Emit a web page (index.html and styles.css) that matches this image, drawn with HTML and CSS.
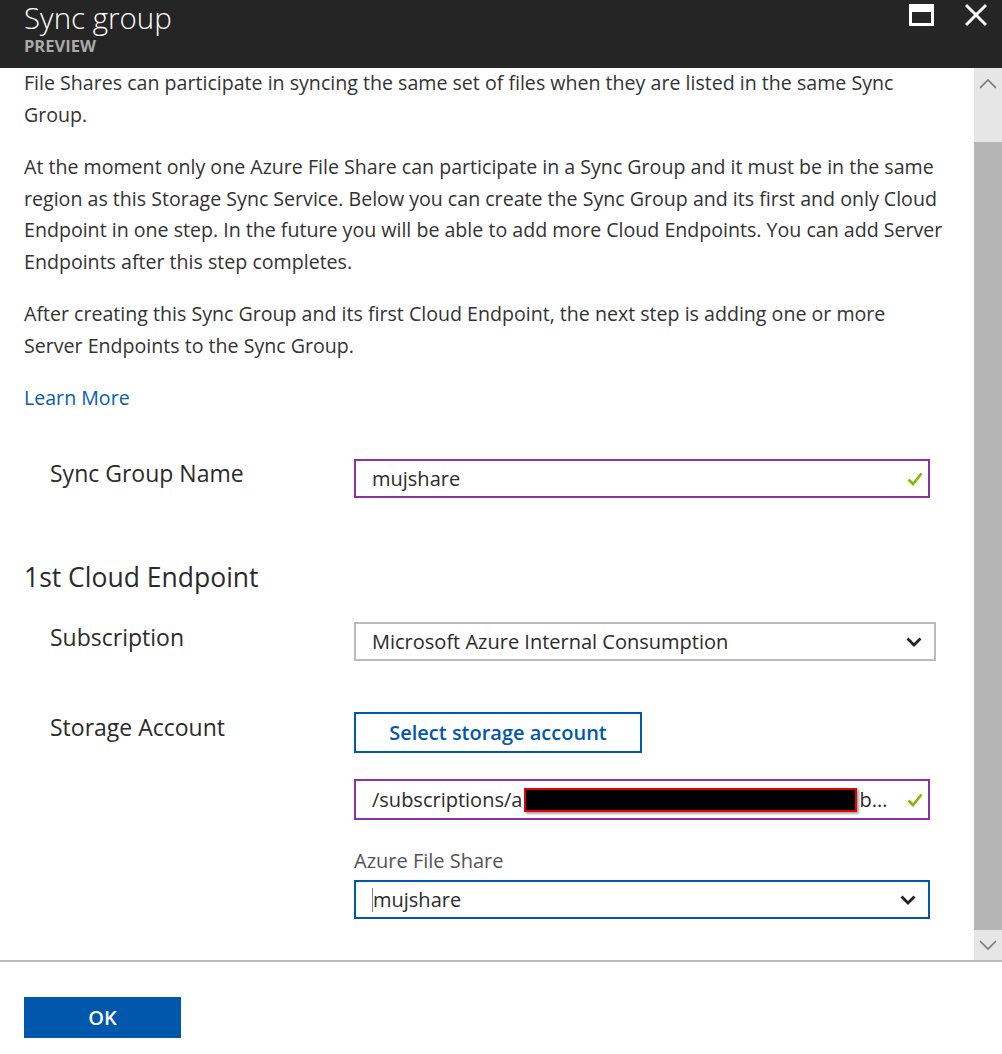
FILE: index.html
```html
<!DOCTYPE html>
<html>
<head>
<meta charset="utf-8">
<link rel="stylesheet" href="styles.css">
</head>
<body>
<div class="blade">
  <header class="header">
    <div class="titles">
      <div class="title">Sync group</div>
      <div class="subtitle">PREVIEW</div>
    </div>
    <div class="controls">
      <svg class="ctl" width="26" height="24" viewBox="0 0 26 24"><path fill="#fff" fill-rule="evenodd" d="M1 1H26V23H1Z M4 9V20H23V9Z"/></svg>
      <svg class="ctl close" width="24" height="24" viewBox="0 0 24 24"><path d="M2 2L22 22M22 2L2 22" stroke="#fff" stroke-width="3"/></svg>
    </div>
  </header>
  <div class="main">
    <div class="content">
      <p class="para">File Shares can participate in syncing the same set of files when they are listed in the same Sync Group.</p>
      <p class="para">At the moment only one Azure File Share can participate in a Sync Group and it must be in the same region as this Storage Sync Service. Below you can create the Sync Group and its first and only Cloud Endpoint in one step. In the future you will be able to add more Cloud Endpoints. You can add Server Endpoints after this step completes.</p>
      <p class="para">After creating this Sync Group and its first Cloud Endpoint, the next step is adding one or more Server Endpoints to the Sync Group.</p>
      <a class="link">Learn More</a>

      <div class="row row-name">
        <div class="label">Sync Group Name</div>
        <div class="field">
          <div class="input valid w576">
            <span class="value">mujshare</span>
            <span class="check"><svg width="16" height="14" viewBox="0 0 16 14"><path d="M1.5 7.5L6 12L14.5 1.5" fill="none" stroke="#7fba00" stroke-width="2.6"/></svg></span>
          </div>
        </div>
      </div>

      <h2 class="section">1st Cloud Endpoint</h2>

      <div class="row row-sub">
        <div class="label">Subscription</div>
        <div class="field">
          <div class="input select w582">
            <span class="value">Microsoft Azure Internal Consumption</span>
            <span class="chev"><svg width="16" height="10" viewBox="0 0 16 10"><path d="M1.5 1.5L8 8L14.5 1.5" fill="none" stroke="#222" stroke-width="2.8"/></svg></span>
          </div>
        </div>
      </div>

      <div class="row row-storage">
        <div class="label">Storage Account</div>
        <div class="field">
          <button class="btn-outline">Select storage account</button>
          <div class="input valid w576 path">
            <span class="value">/subscriptions/a<span class="redact"></span>b...</span>
            <span class="check"><svg width="16" height="14" viewBox="0 0 16 14"><path d="M1.5 7.5L6 12L14.5 1.5" fill="none" stroke="#7fba00" stroke-width="2.6"/></svg></span>
          </div>
          <div class="sublabel">Azure File Share</div>
          <div class="input focus w576">
            <span class="value"><span class="caret"></span>mujshare</span>
            <span class="chev"><svg width="16" height="10" viewBox="0 0 16 10"><path d="M1.5 1.5L8 8L14.5 1.5" fill="none" stroke="#222" stroke-width="2.8"/></svg></span>
          </div>
        </div>
      </div>
    </div>
    <div class="scrollbar">
      <div class="arrow up"><svg width="18" height="10" viewBox="0 0 18 10"><path d="M1 9L9 1L17 9" fill="none" stroke="#777" stroke-width="1.6"/></svg></div>
      <div class="track-gap"></div>
      <div class="thumb"></div>
      <div class="arrow down"><svg width="18" height="10" viewBox="0 0 18 10"><path d="M1 1L9 9L17 1" fill="none" stroke="#777" stroke-width="1.6"/></svg></div>
    </div>
  </div>
  <footer class="footer">
    <button class="btn-primary">OK</button>
  </footer>
</div>
</body>
</html>
```

FILE: styles.css
```css
* { box-sizing: border-box; }
html, body { margin: 0; padding: 0; }
body {
  font-family: "Open Sans", "Noto Sans", "Liberation Sans", sans-serif;
  color: #333;
  background: #fff;
}
.blade {
  width: 1002px;
  height: 1054px;
  display: flex;
  flex-direction: column;
  overflow: hidden;
}
.header {
  height: 68px;
  flex: none;
  background: #252525;
  display: flex;
  justify-content: space-between;
  padding-left: 24px;
}
.title {
  color: #fff;
  font-size: 29.5px;
  font-weight: 300;
  line-height: 34px;
  margin-top: 1px;
}
.subtitle {
  color: #aaa;
  font-size: 16.5px;
  font-weight: 700;
  line-height: 20px;
  margin-top: 1px;
}
.controls {
  display: flex;
  align-items: flex-start;
  gap: 30px;
  padding-top: 3px;
  padding-right: 14px;
}
.main {
  height: 892px;
  flex: none;
  display: flex;
}
.content {
  flex: 1;
  padding: 0 30px 0 24px;
  overflow: hidden;
}
.para {
  margin: 0 0 21px 0;
  font-size: 19.6px;
  line-height: 31.5px;
  color: #333;
}
.para:first-child { margin-top: -1px; }
.link {
  display: block;
  font-size: 19.6px;
  line-height: 32px;
  color: #0a5cb0;
}
.row {
  display: flex;
}
.label {
  width: 330px;
  flex: none;
  padding-left: 26px;
  font-size: 23px;
  line-height: 28px;
  color: #2b2b2b;
}
.row-name { margin-top: 45px; }
.row-sub { margin-top: 28px; }
.row-sub .label { padding-top: 1px; }
.row-storage { margin-top: 51px; }
.row-storage .label { padding-top: 1px; }
.field {
  display: flex;
  flex-direction: column;
  align-items: flex-start;
}
.section {
  margin: 62px 0 0 0;
  font-size: 26.5px;
  font-weight: 400;
  line-height: 34px;
  color: #2b2b2b;
}
.input {
  height: 39px;
  display: flex;
  align-items: center;
  justify-content: space-between;
  border: 2px solid #bbb;
  padding: 0 0 0 16px;
  font-size: 20px;
  color: #2b2b2b;
  background: #fff;
}
.w576 { width: 576px; }
.w582 { width: 582px; }
.input.valid { border-color: #8a31a6; }
.input.focus { border-color: #0058ad; }
.input.path { height: 41px; margin-top: 26px; }
.value { display: flex; align-items: center; white-space: nowrap; }
.check { width: 24px; display: flex; justify-content: center; padding-right: 2px; }
.chev { width: 32px; display: flex; justify-content: center; padding-right: 8px; }
.redact {
  display: inline-block;
  width: 333px;
  height: 24px;
  background: #000;
  border: 2px solid #e60000;
  box-shadow: 2px 2px 2px rgba(0,0,0,0.35);
  margin-left: 2px;
  margin-right: 2px;
}
.caret {
  display: inline-block;
  width: 1px;
  height: 24px;
  background: #888;
}
.btn-outline {
  width: 288px;
  height: 41px;
  border: 2px solid #0058ad;
  background: #fff;
  color: #0058ad;
  font-family: inherit;
  font-size: 20px;
  font-weight: 600;
  padding: 0;
}
.sublabel {
  margin-top: 29px;
  font-size: 20px;
  line-height: 24px;
  color: #555;
  margin-bottom: 7px;
}
.scrollbar {
  width: 28px;
  flex: none;
  background: #e6e6e6;
  display: flex;
  flex-direction: column;
}
.arrow {
  height: 28px;
  display: flex;
  align-items: center;
  justify-content: center;
}
.arrow.up { padding-top: 3px; height: 28px; }
.track-gap { height: 46px; }
.thumb { height: 788px; background: #b5b5b5; }
.arrow.down { height: 30px; }
.footer {
  flex: 1;
  border-top: 2px solid #bbb;
  padding: 35px 24px 0 24px;
}
.btn-primary {
  width: 157px;
  height: 41px;
  background: #0058ad;
  border: none;
  color: #fff;
  font-family: inherit;
  font-size: 20px;
  font-weight: 600;
  padding: 0;
}
```
